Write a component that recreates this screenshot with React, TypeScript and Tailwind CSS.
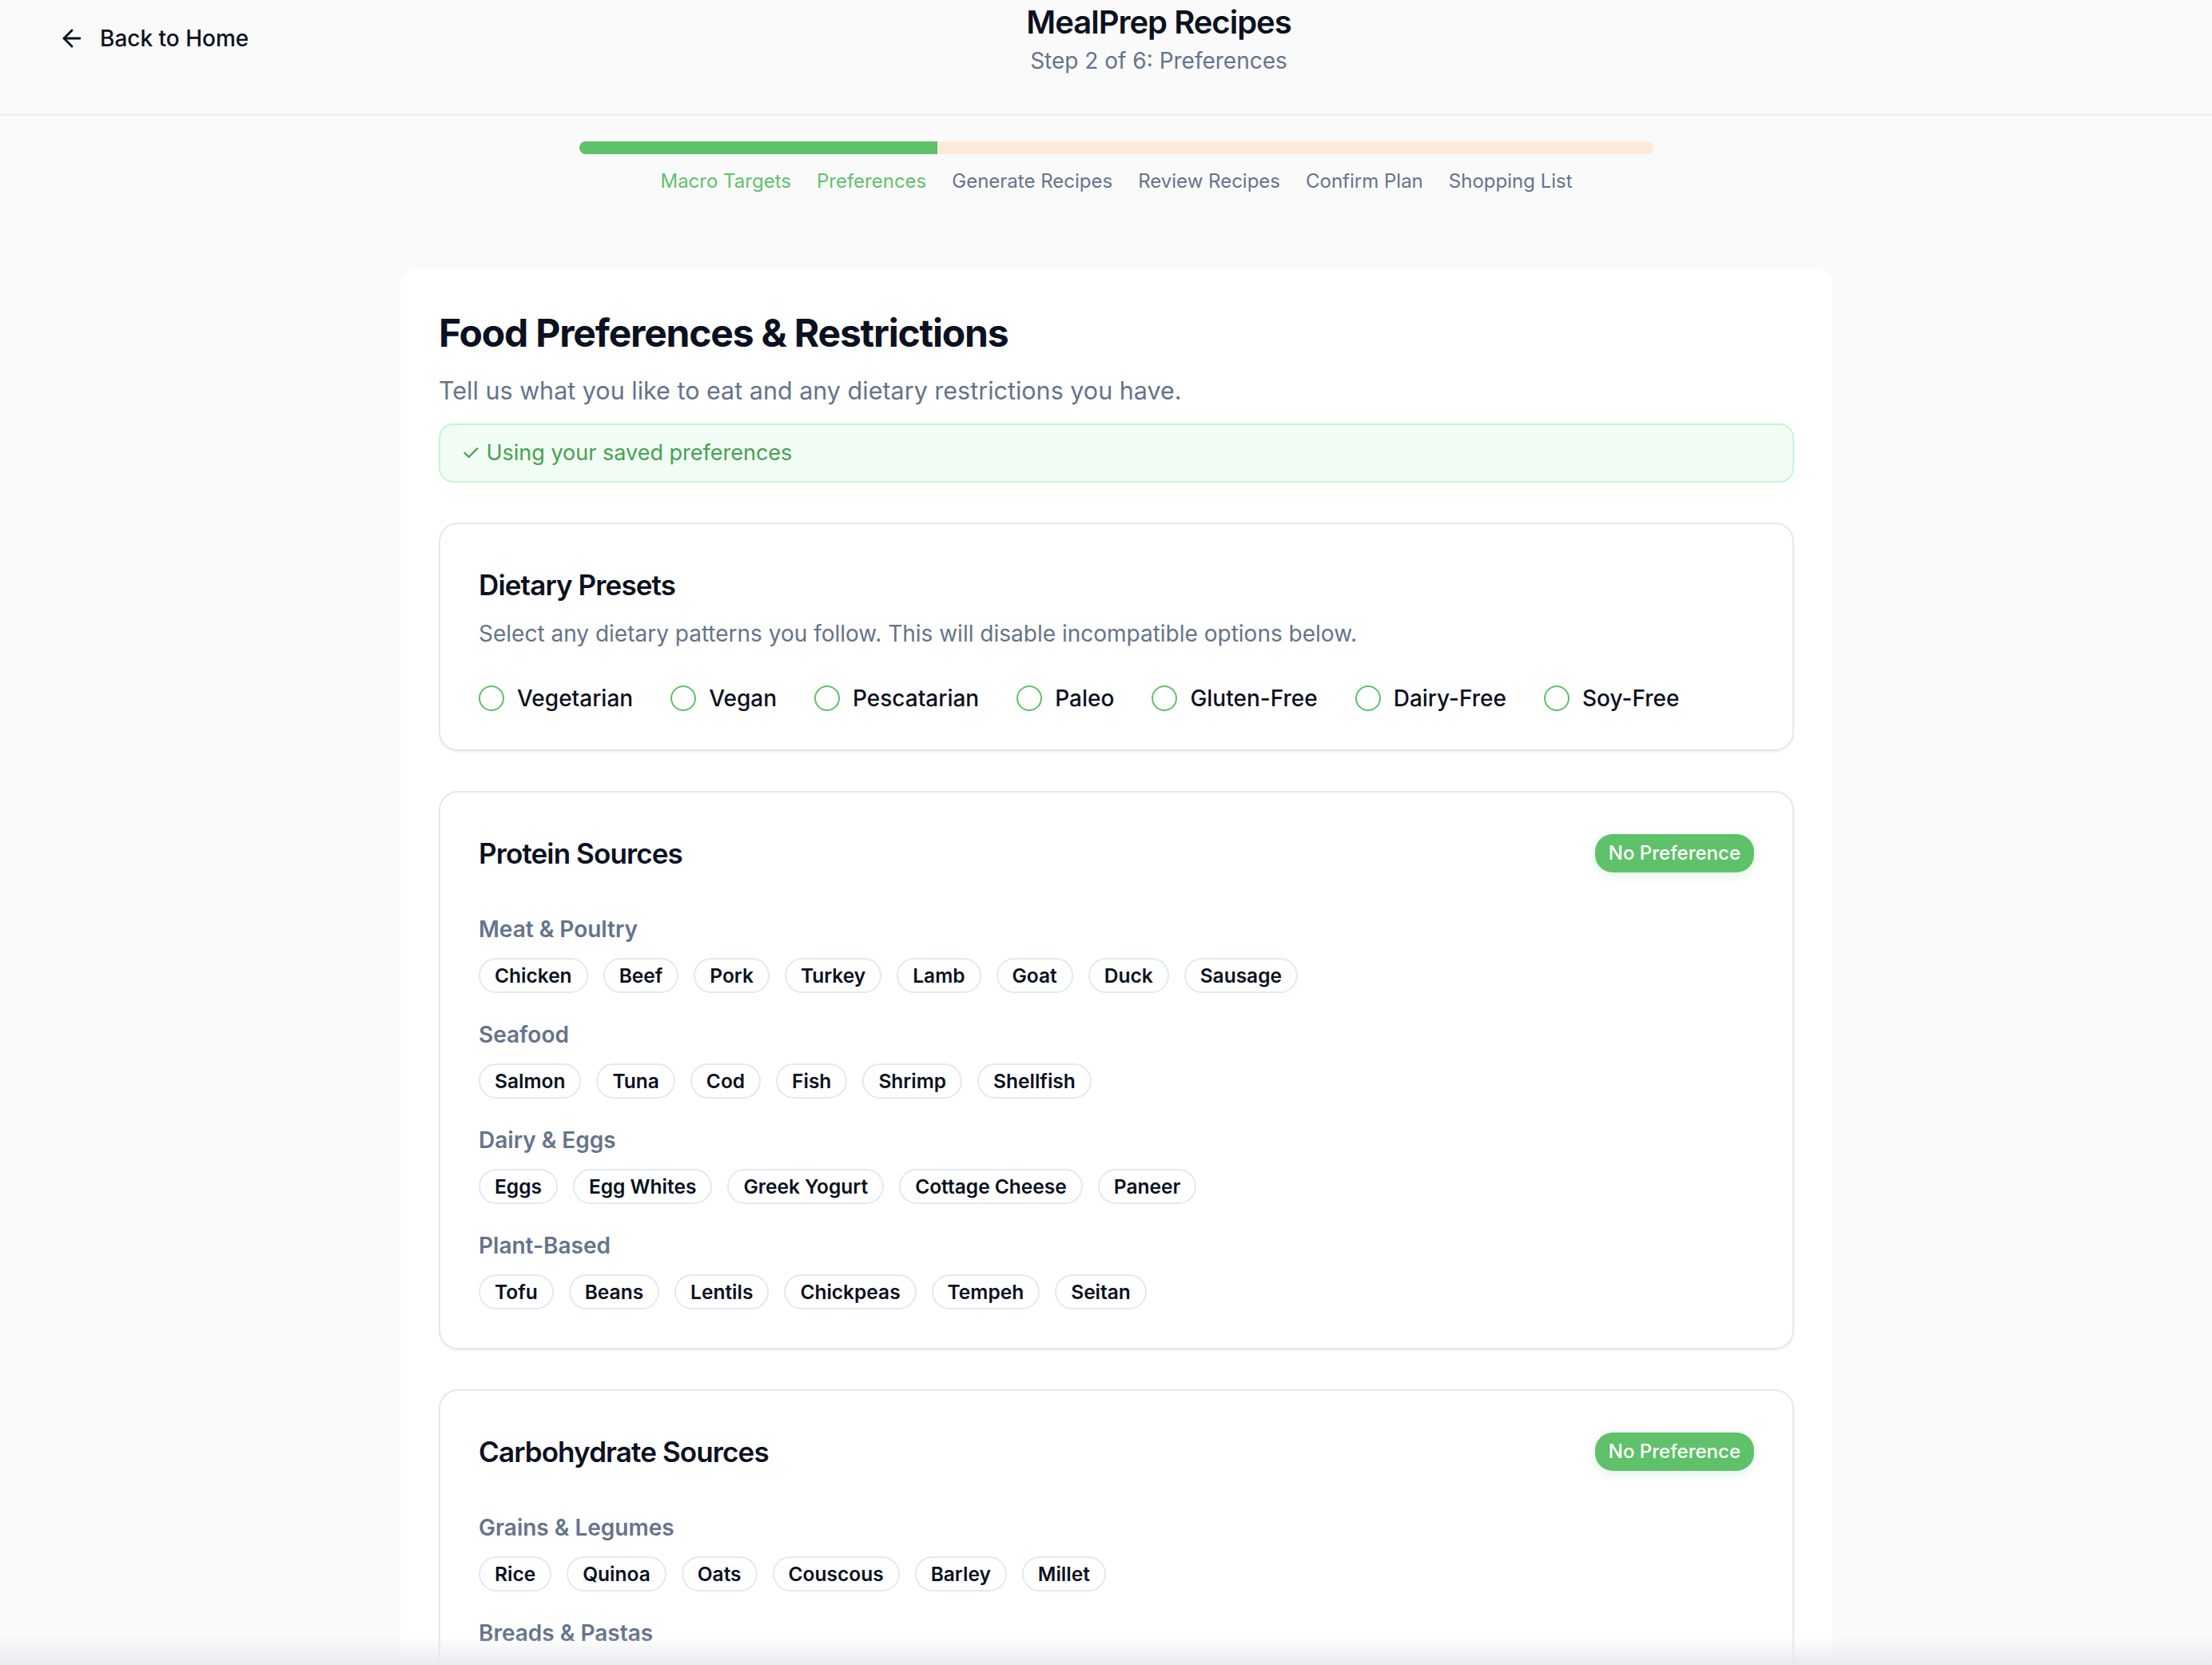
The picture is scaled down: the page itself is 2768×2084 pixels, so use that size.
import React from 'react';
import { ArrowLeft } from 'lucide-react';

const steps = [
  { label: 'Macro Targets', done: true },
  { label: 'Preferences', done: true },
  { label: 'Generate Recipes', done: false },
  { label: 'Review Recipes', done: false },
  { label: 'Confirm Plan', done: false },
  { label: 'Shopping List', done: false },
];

const presets = ['Vegetarian', 'Vegan', 'Pescatarian', 'Paleo', 'Gluten-Free', 'Dairy-Free', 'Soy-Free'];

interface Group {
  title: string;
  items: string[];
}

const proteinGroups: Group[] = [
  { title: 'Meat & Poultry', items: ['Chicken', 'Beef', 'Pork', 'Turkey', 'Lamb', 'Goat', 'Duck', 'Sausage'] },
  { title: 'Seafood', items: ['Salmon', 'Tuna', 'Cod', 'Fish', 'Shrimp', 'Shellfish'] },
  { title: 'Dairy & Eggs', items: ['Eggs', 'Egg Whites', 'Greek Yogurt', 'Cottage Cheese', 'Paneer'] },
  { title: 'Plant-Based', items: ['Tofu', 'Beans', 'Lentils', 'Chickpeas', 'Tempeh', 'Seitan'] },
];

const carbGroups: Group[] = [
  { title: 'Grains & Legumes', items: ['Rice', 'Quinoa', 'Oats', 'Couscous', 'Barley', 'Millet'] },
  { title: 'Breads & Pastas', items: ['Bread', 'Tortillas', 'Pasta', 'Whole Wheat Pasta'] },
  { title: 'Starchy Vegetables', items: ['Potatoes', 'Sweet Potatoes', 'Corn', 'Squash'] },
];

const Chip = ({ label }: { label: string }) => (
  <button className="inline-flex h-[44px] items-center rounded-full border-2 border-[#e4e8ef] bg-white px-[18px] text-[24.5px] font-semibold text-[#0b1120]">
    {label}
  </button>
);

const SourceCard = ({ title, groups }: { title: string; groups: Group[] }) => (
  <section className="rounded-[24px] border-2 border-[#e4e8ef] bg-white p-[48px] shadow-[0_2px_3px_rgba(15,23,42,0.05)]">
    <div className="flex h-[56px] items-center justify-between">
      <h2 className="text-[35px] font-semibold tracking-tight text-[#0b1120]">{title}</h2>
      <span className="flex h-[48px] items-center rounded-[22px] bg-[#5fc16a] px-[17px] text-[24px] font-medium text-white shadow-[0_4px_14px_rgba(95,193,106,0.18)]">
        No Preference
      </span>
    </div>
    <div className="mt-[47px] flex flex-col gap-[32px]">
      {groups.map((g) => (
        <div key={g.title}>
          <h3 className="text-[28px] font-semibold leading-[40px] text-[#64748b]">{g.title}</h3>
          <div className="mt-[16px] flex flex-wrap gap-[19px]">
            {g.items.map((item) => (
              <Chip key={item} label={item} />
            ))}
          </div>
        </div>
      ))}
    </div>
  </section>
);

export default function App() {
  return (
    <div className="min-h-screen bg-[#fafafa] font-['Inter',sans-serif] text-[#0b1120]">
      <header className="border-b-2 border-[#f0f0f3] bg-[#fafafa]">
        <div className="flex items-center pb-[47px] pl-[73px] pr-[181px]">
          <div className="w-[240px]">
            <a className="flex items-center gap-[18px] text-[28px] font-medium leading-[40px]">
              <ArrowLeft size={34} strokeWidth={2} />
              Back to Home
            </a>
          </div>
          <div className="flex-1 text-center">
            <h1 className="text-[40px] font-semibold leading-[56px] tracking-tight">MealPrep Recipes</h1>
            <p className="text-[28px] leading-[40px] text-[#64748b]">Step 2 of 6: Preferences</p>
          </div>
        </div>
      </header>

      <main className="flex flex-col items-center pl-[26px] pt-[32px]">
        <div className="w-[1344px]">
          <div className="h-[16px] overflow-hidden rounded-full bg-[#fdeadb]">
            <div className="h-full w-1/3 bg-[#5fc16a]" />
          </div>
          <div className="mt-[18px] flex justify-center gap-[32px] text-[24px] leading-[32px]">
            {steps.map((s) => (
              <span key={s.label} className={s.done ? 'text-[#5fc16a]' : 'text-[#64748b]'}>
                {s.label}
              </span>
            ))}
          </div>
        </div>

        <div className="mt-[92px] w-[1792px] rounded-[24px] bg-white px-[48px] pb-[48px] pt-[50px]">
          <h1 className="text-[48px] font-bold leading-[64px] tracking-tight">Food Preferences &amp; Restrictions</h1>
          <p className="mt-[16px] text-[30.5px] leading-[48px] text-[#64748b]">
            Tell us what you like to eat and any dietary restrictions you have.
          </p>
          <div className="mt-[17px] rounded-[18px] border-2 border-[#c8f5d3] bg-[#f1fcf4] px-[26px] py-[15px] text-[27px] leading-[40px] text-[#45a250]">
            ✓ Using your saved preferences
          </div>

          <div className="mt-[50px] flex flex-col gap-[50px]">
            <section className="rounded-[24px] border-2 border-[#e4e8ef] bg-white p-[48px] shadow-[0_2px_3px_rgba(15,23,42,0.05)]">
              <h2 className="text-[35px] font-semibold leading-[56px] tracking-tight">Dietary Presets</h2>
              <p className="mt-[13px] text-[28px] leading-[40px] text-[#64748b]">
                Select any dietary patterns you follow. This will disable incompatible options below.
              </p>
              <div className="mt-[45px] flex gap-[47px]">
                {presets.map((p) => (
                  <label key={p} className="flex h-[32px] items-center gap-[16px]">
                    <span className="h-[32px] w-[32px] rounded-full border-2 border-[#5fc16a]" />
                    <span className="text-[28px] font-medium">{p}</span>
                  </label>
                ))}
              </div>
            </section>

            <SourceCard title="Protein Sources" groups={proteinGroups} />
            <SourceCard title="Carbohydrate Sources" groups={carbGroups} />
          </div>
        </div>
      </main>

      <div className="pointer-events-none fixed inset-x-0 bottom-0 h-[36px] bg-gradient-to-b from-transparent to-[#e8eaee]" />
    </div>
  );
}
